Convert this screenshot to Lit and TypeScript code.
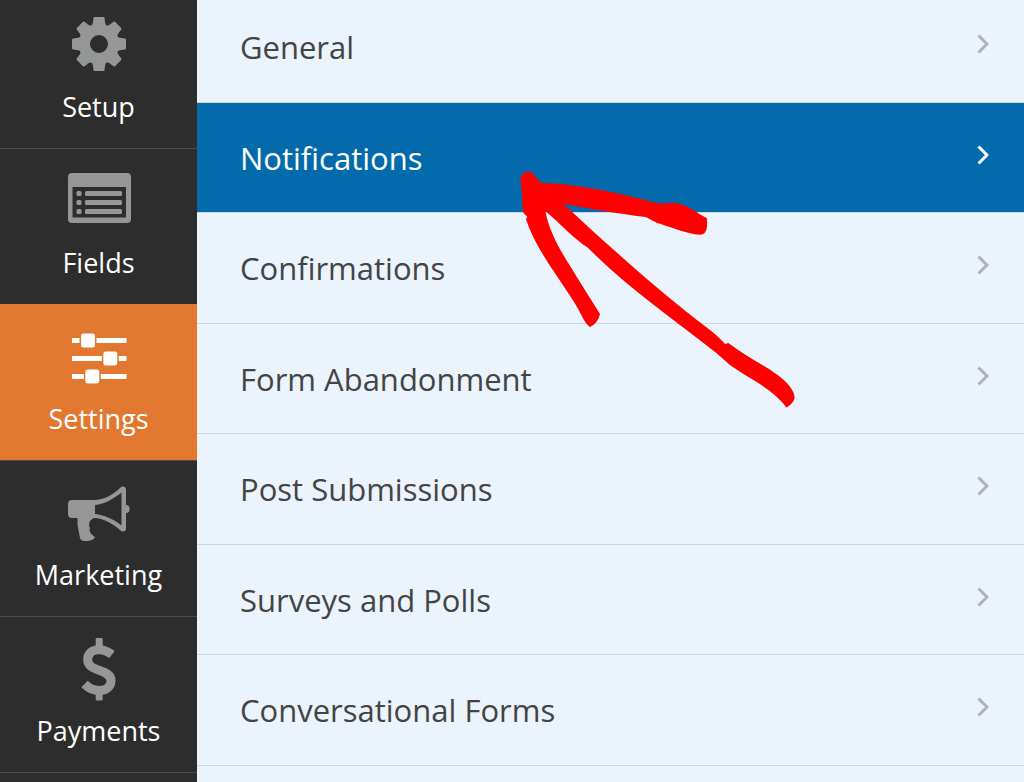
import { LitElement, html, css, svg } from "lit";
import { customElement, state } from "lit/decorators.js";
import { classMap } from "lit/directives/class-map.js";

const teeth = [0, 45, 90, 135, 180, 225, 270, 315];

const gear = svg`
  <g transform="translate(33 32)">
    <circle r="14.5" fill="none" stroke="currentColor" stroke-width="11" />
    ${teeth.map(
      (a) => svg`<path transform="rotate(${a})" fill="currentColor"
        d="M-8-18Q-6.500-19-6.200-21L-5.500-26Q-5.300-27-4.300-27H4.300Q5.300-27 5.500-26L6.200-21Q6.500-19 8-18Z" />`
    )}
  </g>`;

const fields = svg`
  <path fill="currentColor" fill-rule="evenodd"
    d="M6 5H61Q65 5 65 9V51Q65 55 61 55H6Q2 55 2 51V9Q2 5 6 5ZM6.500 19V49.500H60V19Z" />
  <g fill="currentColor">
    <rect x="10.500" y="23" width="5" height="5" rx="1.500" /><rect x="19" y="23" width="37" height="5" rx="1.500" />
    <rect x="10.500" y="32" width="5" height="5" rx="1.500" /><rect x="19" y="32" width="37" height="5" rx="1.500" />
    <rect x="10.500" y="41" width="5" height="5" rx="1.500" /><rect x="19" y="41" width="37" height="5" rx="1.500" />
  </g>`;

const sliders = svg`
  <path d="M6 16.500H60.500M6 34.500H60.500M6 52.500H60.500" stroke="currentColor" stroke-width="5" />
  <g fill="currentColor" stroke="#e27730" stroke-width="1.500">
    <rect x="14.300" y="8.800" width="15.400" height="15.400" rx="3" />
    <rect x="36.600" y="26.800" width="15.400" height="15.400" rx="3" />
    <rect x="18.600" y="44.800" width="15.400" height="15.400" rx="3" />
  </g>`;

const megaphone = svg`
  <path fill="currentColor" fill-rule="evenodd"
    d="M6 20H28C38 20 47 15 54.500 7.500C57 5.500 60 7 60 9.500V24.800A4.300 4.300 0 0 1 60 33.300V48.500C60 51.500 57 52.500 54.500 50.500C46 43 38 38.500 28 38C24.500 39.500 23 42 23.300 44.500C22 46 25 47.500 23.600 49.500C23.500 53 26 54.500 29 57.300C27 60.500 23.500 61 20.500 61C17 61 14.500 60.500 14 58L11.500 45V38H6Q2 38 2 34V24Q2 20 6 20ZM29 25V34C39 35 48 39.500 55.500 45.500V12.500C48 18.500 39 24 29 25Z" />`;

const dollar = svg`
  <path fill="none" stroke="currentColor" stroke-width="9"
    d="M46 18.500C42 15.500 38 13.800 33 13.800C26 13.800 21.700 17.500 21.700 23.500C21.700 30 27 32 33 34.200C40 36.700 45 39 45 44.500C45 51 40 54.500 33 54.500C27 54.500 22.500 52 18.500 48" />
  <path fill="currentColor" d="M29.700 3Q29.700 2 30.700 2H35.700Q36.700 2 36.700 3V12H29.700ZM29.700 56H36.700V63.500Q36.700 64.500 35.700 64.500H30.700Q29.700 64.500 29.700 63.500Z" />`;

const panels = [
  { label: "Setup", icon: gear },
  { label: "Fields", icon: fields },
  { label: "Settings", icon: sliders },
  { label: "Marketing", icon: megaphone },
  { label: "Payments", icon: dollar },
];

const sections = [
  "General",
  "Notifications",
  "Confirmations",
  "Form Abandonment",
  "Post Submissions",
  "Surveys and Polls",
  "Conversational Forms",
];

@customElement("app-root")
export class AppRoot extends LitElement {
  static styles = css`
    :host {
      position: relative;
      display: grid;
      grid-template-columns: 197px 1fr;
      min-height: 100vh;
      overflow: hidden;
      background: #ebf3fc;
      font-family: "Segoe UI", "Open Sans", "Noto Sans", sans-serif;
    }
    .toolbar {
      background: #2d2d2d;
    }
    /* Both columns are scrolled a few pixels past their top. */
    .panels,
    .sections {
      display: flex;
      flex-direction: column;
      margin-top: -8px;
    }
    button {
      margin: 0;
      border: 0;
      font: inherit;
      cursor: pointer;
    }
    .panel {
      box-sizing: border-box;
      height: 156px;
      padding: 19px 0 0;
      display: flex;
      flex-direction: column;
      align-items: center;
      gap: 11px;
      border-top: 1px solid #4c4c4c;
      background: #2d2d2d;
      color: #959797;
      font-size: 27px;
      line-height: 40px;
    }
    .panel:last-child {
      height: 157px;
      border-bottom: 1px solid #4c4c4c;
    }
    .panel.active {
      background: #e27730;
      border-color: #e27730;
      color: #fff;
    }
    .panel svg {
      width: 65px;
      height: 64px;
      overflow: visible;
    }
    .name {
      color: #fff;
    }
    .section {
      box-sizing: border-box;
      height: 110px;
      padding: 0 35px 0 43px;
      display: flex;
      align-items: center;
      justify-content: space-between;
      border-bottom: 1px solid #ccd5e1;
      background: #ebf3fc;
      color: #444;
      font-size: 31px;
      line-height: 44px;
      text-align: left;
    }
    .section:nth-child(odd) {
      height: 111px;
    }
    .section.active {
      background: #036aab;
      color: #fff;
    }
    .chevron {
      width: 12px;
      height: 20px;
      margin-bottom: 6px;
      fill: none;
      stroke: #b0b3b6;
      stroke-width: 3px;
    }
    .active .chevron {
      stroke: #fff;
    }
    .arrow {
      position: absolute;
      left: 510px;
      top: 160px;
      width: 300px;
      height: 260px;
      fill: #f00;
      pointer-events: none;
    }
  `;

  @state() private panel = "Settings";
  @state() private section = "Notifications";

  render() {
    return html`
      <nav class="toolbar" aria-label="Builder">
        <div class="panels">
          ${panels.map(
            (p) => html`<button
              class=${classMap({ panel: true, active: p.label === this.panel })}
              @click=${() => (this.panel = p.label)}
            >
              <svg viewBox="0 0 65 64" aria-hidden="true">${p.icon}</svg>
              <span class="name">${p.label}</span>
            </button>`
          )}
        </div>
      </nav>
      <main>
        <div class="sections">
          ${sections.map(
            (s) => html`<button
              class=${classMap({ section: true, active: s === this.section })}
              @click=${() => (this.section = s)}
            >
              <span>${s}</span>
              <svg class="chevron" viewBox="0 0 12 20" aria-hidden="true">
                <path d="M1.500 1.500L10 10L1.500 18.500" />
              </svg>
            </button>`
          )}
        </div>
      </main>
      <svg class="arrow" viewBox="0 0 900 780" aria-hidden="true">
        <path
          d="M55 33L68 40L92 68C170 70 300 90 420 124Q450 134 470 129C515 123 540 145 591 175V200Q588 224 570 224C530 222 475 198 440 188L407 171C320 160 230 145 160 131C330 290 480 420 600 510Q620 525 645 552L655 549C720 600 800 630 840 680C862 710 856 725 830 743C780 680 730 665 660 615L620 580C480 470 350 380 232 262C190 235 150 190 106 153C120 230 170 300 200 350L270 462Q264 490 240 501C222 490 215 460 185 415C130 330 75 260 48 178L52 170L40 158C35 120 38 90 31 60Q33 38 55 33Z"
        />
      </svg>
    `;
  }
}
